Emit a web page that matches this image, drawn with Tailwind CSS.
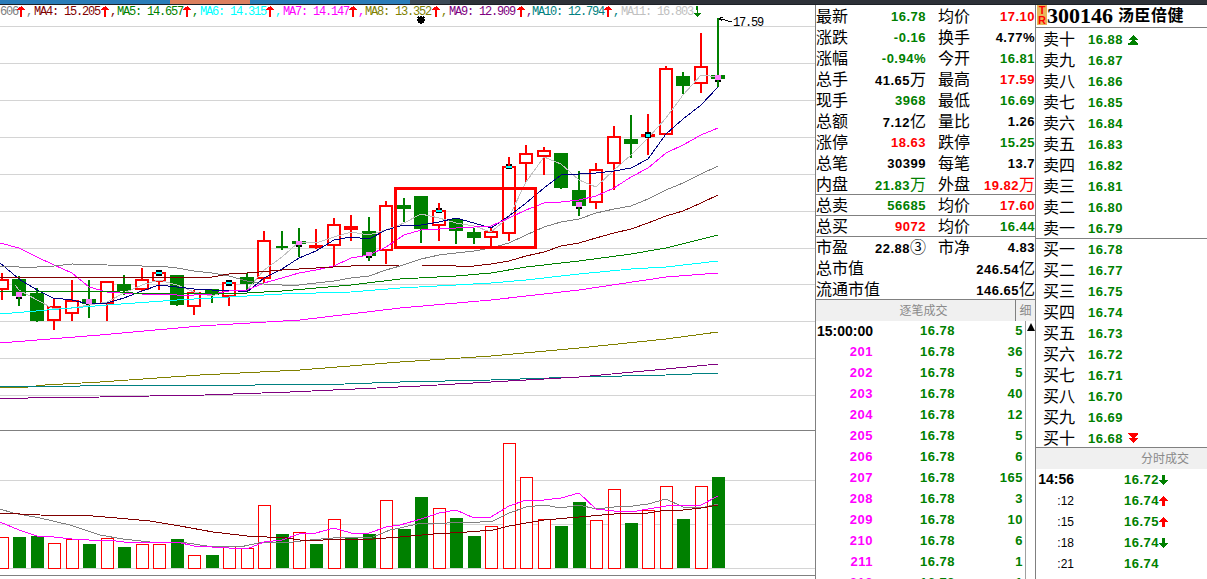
<!DOCTYPE html>
<html lang="zh">
<head>
<meta charset="utf-8">
<title>300146 汤臣倍健</title>
<script src="https://cdn.jsdelivr.net/npm/@tailwindcss/browser@4"></script>
</head>
<body class="m-0 bg-white">
<div class="w-[1207px] h-[579px] overflow-hidden bg-white flex flex-col text-black font-['Liberation_Sans','Noto_Sans_CJK_SC',sans-serif]">
  <!-- window strip -->
  <div class="h-[5px] flex shrink-0 border-b border-[#1c2026]">
    <div class="w-[170px] bg-[#2a7cb8]"></div>
    <div class="w-[80px] bg-[#dc7f5e]"></div>
    <div class="w-[160px] bg-[#2a7cb8]"></div>
    <div class="w-[40px] bg-[#3d4a57]"></div>
    <div class="flex-1 bg-[#2d3138]"></div>
  </div>
  <div class="flex flex-1 min-h-0">
    <!-- chart -->
    <div class="relative w-[815px] h-[574px] shrink-0 overflow-hidden">
      <svg width="815" height="574" viewBox="0 5 815 574" shape-rendering="crispEdges" fill="none">
        <path stroke="#d4d4d4" d="M0 26.5H815M0 63.5H815M0 100.5H815M0 137.5H815M0 174.5H815M0 211.5H815M0 248.5H815M0 284.5H815M0 321.5H815M0 358.5H815M0 395.5H815M0 480.5H815M0 524.5H815M0 568.5H815"/>
        <path stroke="#808080" d="M0 430.5H815M0 575.5H815"/>
        <!-- candle wicks -->
        <path stroke="#ff0000" stroke-width="2" d="M2 273V279M2 290V300M54 299V306M54 321V330M72 280V300M72 314V321M107 304V321M142 268V279M142 290V291M159 270V272M159 282V290M194 290V292M194 307V315M229 297V306M264 231V240M264 279V283M316 229V245M316 248V249M334 218V224M334 246V267M351 215V226M351 230V241M386 201V205M386 251V264M439 203V210M439 226V241M491 228V231M491 238V248M509 157V166M509 234V241M526 145V153M526 164V182M544 147V150M544 157V175M596 163V169M596 203V209M614 126V136M614 164V190M648 114V134M648 137V155M666 66V68M701 33V66M701 84V93"/>
        <path stroke="#008000" stroke-width="2" d="M19 276V306M37 288V322M89 280V318M124 275V295M177 275V306M212 289V303M247 273V291M282 231V250M299 228V257M369 217V261M404 198V222M421 196V243M456 219V244M474 228V244M561 153V189M579 171V216M631 115V158M683 72V94M718 18V87"/>
        <!-- candle bodies -->
        <path fill="#ffffff" stroke="#ff0000" stroke-width="2" d="M-4 280H8V289H-4ZM48 307H60V320H48ZM66 301H78V313H66ZM101 282H113V303H101ZM136 280H148V289H136ZM153 273H165V281H153ZM188 293H200V306H188ZM223 283H235V296H223ZM258 241H270V278H258ZM310 246H322V247H310ZM328 225H340V245H328ZM345 227H357V229H345ZM380 206H392V250H380ZM433 211H445V225H433ZM485 232H497V237H485ZM503 167H515V233H503ZM520 154H532V163H520ZM538 151H550V156H538ZM590 170H602V202H590ZM608 137H620V163H608ZM642 135H654V136H642ZM660 69H672V134H660ZM695 67H707V83H695Z"/>
        <path fill="#008000" d="M12 279h14v17h-14zM30 293h14v28h-14zM82 299h14v5h-14zM117 284h14v7h-14zM170 275h14v30h-14zM205 289h14v6h-14zM240 277h14v7h-14zM276 246h12v2h-12zM292 241h14v3h-14zM362 231h14v25h-14zM397 205h14v4h-14zM414 196h14v33h-14zM449 219h14v12h-14zM467 232h14v6h-14zM554 153h14v35h-14zM572 190h14v16h-14zM624 139h14v5h-14zM676 76h14v10h-14zM711 75h14v4h-14z"/>
        <!-- moving averages -->
        <polyline stroke="#c0c0c0" points="15,285 19,290 37,300 54,309 72,308 89,305 107,302 124,293 142,285 159,280 177,285 194,292 212,296 229,290 247,290 264,270 282,257 299,242 316,243 334,237 351,232 369,235 386,230 404,223 421,214 439,218 456,223 474,226 491,232 509,217 526,182 544,157 561,164 579,180 596,187 614,170 631,155 648,138 666,118 683,95 701,75 718,77"/>
        <polyline stroke="#000080" points="0,263 19,279 37,290 53,298 72,300 89,304 107,303 124,298 142,291 159,285 177,287 194,289 212,290 229,290 247,292 264,278 282,269 299,258 316,251 334,240 351,237 369,239 386,230 404,225 421,225 439,222 456,218 474,223 491,228 509,216 526,203 544,188 561,175 579,174 596,173 614,171 631,168 648,159 666,134 683,119 701,105 718,87"/>
        <polyline stroke="#ff00ff" points="0,243 19,248 37,257 54,265 72,273 89,287 107,292 124,293 142,294 159,294 177,295 194,295 212,294 229,291 247,290 264,283 282,278 299,273 316,270 334,266 351,258 369,255 386,247 404,235 421,230 439,229 456,228 474,227 491,226 509,218 526,210 544,203 561,202 579,200 596,196 614,188 631,177 648,168 666,153 683,145 701,135 718,128"/>
        <polyline stroke="#808080" points="0,266 19,267 37,267 54,266 72,264 107,265 142,266 159,266 177,268 194,271 212,273 229,276 247,281 264,284 282,285 299,285 316,283 334,281 351,278 369,276 386,270 400,266 421,259 439,255 456,253 474,251 491,248 509,243 526,235 544,227 561,222 579,219 596,213 614,209 631,206 648,199 666,190 683,183 701,174 718,166"/>
        <polyline stroke="#800000" points="0,277 54,277 107,277 177,277 212,277 229,274 247,273 282,270 316,268 351,266 400,265 421,265 456,266 474,266 491,264 509,261 526,256 544,252 561,246 579,243 596,238 614,233 631,229 648,223 666,216 683,211 701,203 718,195"/>
        <polyline stroke="#008000" points="0,291 107,291 133,293 177,293 247,293 282,291 316,288 351,285 400,279 456,276 491,273 526,267 579,261 631,254 666,248 718,235"/>
        <polyline stroke="#00ffff" points="0,314 107,305 177,300 282,294 351,292 400,288 456,285 491,283 526,280 579,274 631,269 666,267 718,261"/>
        <polyline stroke="#ff00ff" points="0,343 100,335 200,326 300,320 400,308 491,300 579,290 666,277 718,273"/>
        <polyline stroke="#808000" points="0,388 28,387 45,385 100,382 200,375 300,370 400,362 491,356 579,348 666,339 718,332"/>
        <polyline stroke="#008080" points="0,386 80,386 81,385 255,385 345,384 400,382 491,380 579,377 666,375 718,373"/>
        <polyline stroke="#800080" points="0,398 28,398 100,397 150,396 205,395 290,392 355,389 420,386 491,382 579,377 666,369 718,364"/>
        <!-- markers -->
        <path fill="#ff80ff" d="M16 292h6v5h-6zM86 299h6v5h-6zM296 241h6v4h-6zM366 252h6v4h-6zM576 202h6v5h-6zM715 75h6v5h-6z"/>
        <path fill="#000000" d="M16 297h2v2h-2zM20 297h2v2h-2zM86 304h2v1h-2zM296 245h2v2h-2zM300 245h2v2h-2zM366 256h2v2h-2zM370 256h2v2h-2zM576 207h2v2h-2zM580 207h2v2h-2zM715 80h2v2h-2zM719 80h2v2h-2zM156 270h6v2h-6zM156 274h6v2h-6zM226 280h6v2h-6zM226 284h6v2h-6zM436 208h2v2h-2zM440 208h2v2h-2zM436 212h6v1h-6zM506 164h2v2h-2zM510 164h2v2h-2zM506 168h6v1h-6zM645 132h6v6h-6z"/>
        <path fill="#00ffff" d="M156 272h6v2h-6zM226 282h6v2h-6zM436 210h6v2h-6zM506 166h6v2h-6zM646 134h4v3h-4z"/>
        <!-- annotation -->
        <path stroke="#000000" d="M719 18.5L732 22M719 18.5L723 17M719 18.5L722 21"/>
        <path stroke="#000000" stroke-width="2" d="M418 17L424 23M424 17L418 23M421 16V24M417 20H425"/>
        <!-- red box -->
        <rect x="395.5" y="188.5" width="140" height="59" fill="none" stroke="#ff0000" stroke-width="3"/>
        <!-- volume bars -->
        <path fill="#008000" d="M13 537h13v31h-13zM31 536h13v32h-13zM83 544h13v24h-13zM118 547h13v21h-13zM171 539h13v29h-13zM206 555h13v13h-13zM276 534h13v34h-13zM310 544h13v24h-13zM345 537h13v31h-13zM363 534h13v34h-13zM398 529h13v39h-13zM415 497h13v71h-13zM450 518h13v50h-13zM468 536h13v32h-13zM555 526h13v42h-13zM573 502h13v66h-13zM625 523h13v45h-13zM677 519h13v49h-13zM712 477h13v91h-13z"/>
        <path fill="#ffffff" stroke="#ff0000" d="M-4 537.5H8.5V568.5H-4ZM48.5 543.5H60.5V568.5H48.5ZM66.5 539.5H78.5V568.5H66.5ZM101.5 538.5H113.5V568.5H101.5ZM136.5 544.5H148.5V568.5H136.5ZM153.5 544.5H165.5V568.5H153.5ZM188.5 555.5H200.5V568.5H188.5ZM223.5 546.5H235.5V568.5H223.5ZM241.5 548.5H253.5V568.5H241.5ZM258.5 505.5H270.5V568.5H258.5ZM293.5 532.5H305.5V568.5H293.5ZM328.5 519.5H340.5V568.5H328.5ZM380.5 500.5H392.5V568.5H380.5ZM433.5 508.5H445.5V568.5H433.5ZM485.5 526.5H497.5V568.5H485.5ZM503.5 443.5H515.5V568.5H503.5ZM520.5 477.5H532.5V568.5H520.5ZM538.5 519.5H550.5V568.5H538.5ZM590.5 520.5H602.5V568.5H590.5ZM608.5 489.5H620.5V568.5H608.5ZM642.5 510.5H654.5V568.5H642.5ZM660.5 486.5H672.5V568.5H660.5ZM695.5 486.5H707.5V568.5H695.5Z"/>
        <!-- volume averages -->
        <polyline stroke="#808080" points="0,509 13,513 40,518 70,525 100,535 123,539 150,542 180,542 207,546 240,547 263,542 293,542 310,540 333,538 373,537 390,530 400,528 421,523 447,523 456,522 480,522 493,521 509,513 526,507 544,505 561,508 579,505 596,509 614,507 633,506 648,504 666,499 683,507 701,508 718,504"/>
        <polyline stroke="#ff00ff" points="0,522 19,530 37,536 54,537 72,539 89,540 107,540 124,542 142,542 159,543 177,542 194,546 212,547 229,548 247,549 264,542 282,540 299,534 316,533 334,528 351,533 369,533 386,527 400,525 421,519 439,513 456,510 474,518 491,517 509,506 526,500 544,500 561,498 579,493 596,509 614,511 631,512 648,509 666,506 683,505 701,505 718,496"/>
        <polyline stroke="#800000" points="0,513 40,515 93,516 117,518 150,521 180,526 213,532 247,536 267,537 287,538 300,540 323,540 347,539 373,539 400,537 433,534 467,532 493,530 509,526 526,523 544,520 579,517 614,514 648,513 666,510 683,510 701,508 718,505"/>
      </svg>
      <!-- legend -->
      <div class="absolute left-0 top-px flex h-[12px] items-center whitespace-nowrap font-['Liberation_Mono',monospace] text-[12px] leading-[12px] tracking-[-1.2px]">
        <div class="flex w-[34px] text-[#808080]"><span class="w-[17px]">606</span><svg width="9" height="11" viewBox="0 0 9 11" shape-rendering="crispEdges"><path fill="#ff0000" d="M4 0h1v1h1v1h1v1h1v1h-3v7h-2v-7h-3v-1h1v-1h1v-1h1z"/></svg><span>,</span></div>
        <div class="flex w-[83px] text-[#800000]"><span class="w-[67px]">MA4: 15.205</span><svg width="9" height="11" viewBox="0 0 9 11" shape-rendering="crispEdges"><path fill="#ff0000" d="M4 0h1v1h1v1h1v1h1v1h-3v7h-2v-7h-3v-1h1v-1h1v-1h1z"/></svg><span>,</span></div>
        <div class="flex w-[83px] text-[#008000]"><span class="w-[66px]">MA5: 14.657</span><svg width="9" height="11" viewBox="0 0 9 11" shape-rendering="crispEdges"><path fill="#ff0000" d="M4 0h1v1h1v1h1v1h1v1h-3v7h-2v-7h-3v-1h1v-1h1v-1h1z"/></svg><span>,</span></div>
        <div class="flex w-[83px] text-[#00ffff]"><span class="w-[66px]">MA6: 14.315</span><svg width="9" height="11" viewBox="0 0 9 11" shape-rendering="crispEdges"><path fill="#ff0000" d="M4 0h1v1h1v1h1v1h1v1h-3v7h-2v-7h-3v-1h1v-1h1v-1h1z"/></svg><span>,</span></div>
        <div class="flex w-[82px] text-[#ff00ff]"><span class="w-[66px]">MA7: 14.147</span><svg width="9" height="11" viewBox="0 0 9 11" shape-rendering="crispEdges"><path fill="#ff0000" d="M4 0h1v1h1v1h1v1h1v1h-3v7h-2v-7h-3v-1h1v-1h1v-1h1z"/></svg><span>,</span></div>
        <div class="flex w-[84px] text-[#808000]"><span class="w-[67px]">MA8: 13.352</span><svg width="9" height="11" viewBox="0 0 9 11" shape-rendering="crispEdges"><path fill="#ff0000" d="M4 0h1v1h1v1h1v1h1v1h-3v7h-2v-7h-3v-1h1v-1h1v-1h1z"/></svg><span>,</span></div>
        <div class="flex w-[83px] text-[#800080]"><span class="w-[68px]">MA9: 12.909</span><svg width="9" height="11" viewBox="0 0 9 11" shape-rendering="crispEdges"><path fill="#ff0000" d="M4 0h1v1h1v1h1v1h1v1h-3v7h-2v-7h-3v-1h1v-1h1v-1h1z"/></svg><span>,</span></div>
        <div class="flex w-[89px] text-[#008080]"><span class="w-[72px]">MA10: 12.794</span><svg width="9" height="11" viewBox="0 0 9 11" shape-rendering="crispEdges"><path fill="#ff0000" d="M4 0h1v1h1v1h1v1h1v1h-3v7h-2v-7h-3v-1h1v-1h1v-1h1z"/></svg><span>,</span></div>
        <div class="flex w-[89px] text-[#c0c0c0]"><span class="w-[72px]">MA11: 16.803</span><svg width="9" height="11" viewBox="0 0 9 11" shape-rendering="crispEdges"><path fill="#008000" d="M3 0h2v7h3v1h-1v1h-1v1h-1v1h-1v-1h-1v-1h-1v-1h-1v-1h3z"/></svg></div>
      </div>
      <div class="absolute left-[733px] top-[12px] font-['Liberation_Mono',monospace] text-[12px] leading-[12px] tracking-[-1.2px] text-black">17.59</div>
    </div>

    <!-- quote column -->
    <div class="w-[220px] h-[574px] shrink-0 border-l border-[#808080] flex flex-col text-[16px] overflow-hidden">
      <div class="flex h-[21px] pt-[2px] items-center whitespace-nowrap"><span class="w-[48px]">最新</span><span class="w-[62px] text-right text-[13px] font-bold tracking-[0.5px] text-[#008000]">16.78</span><span class="ml-[12px] w-[48px]">均价</span><span class="w-[49px] text-right text-[13px] font-bold tracking-[0.5px] text-[#ff0000]">17.10</span></div>
      <div class="flex h-[21px] pt-[2px] items-center whitespace-nowrap"><span class="w-[48px]">涨跌</span><span class="w-[62px] text-right text-[13px] font-bold tracking-[0.5px] text-[#008000]">-0.16</span><span class="ml-[12px] w-[48px]">换手</span><span class="w-[49px] text-right text-[13px] font-bold tracking-[0.5px]">4.77%</span></div>
      <div class="flex h-[21px] pt-[2px] items-center whitespace-nowrap"><span class="w-[48px]">涨幅</span><span class="w-[62px] text-right text-[13px] font-bold tracking-[0.5px] text-[#008000]">-0.94%</span><span class="ml-[12px] w-[48px]">今开</span><span class="w-[49px] text-right text-[13px] font-bold tracking-[0.5px] text-[#008000]">16.81</span></div>
      <div class="flex h-[21px] pt-[2px] items-center whitespace-nowrap"><span class="w-[48px]">总手</span><span class="w-[62px] text-right text-[13px] font-bold tracking-[0.5px]">41.65<span class="text-[16px] font-normal tracking-normal">万</span></span><span class="ml-[12px] w-[48px]">最高</span><span class="w-[49px] text-right text-[13px] font-bold tracking-[0.5px] text-[#ff0000]">17.59</span></div>
      <div class="flex h-[21px] pt-[2px] items-center whitespace-nowrap"><span class="w-[48px]">现手</span><span class="w-[62px] text-right text-[13px] font-bold tracking-[0.5px] text-[#008000]">3968</span><span class="ml-[12px] w-[48px]">最低</span><span class="w-[49px] text-right text-[13px] font-bold tracking-[0.5px] text-[#008000]">16.69</span></div>
      <div class="flex h-[21px] pt-[2px] items-center whitespace-nowrap"><span class="w-[48px]">总额</span><span class="w-[62px] text-right text-[13px] font-bold tracking-[0.5px]">7.12<span class="text-[16px] font-normal tracking-normal">亿</span></span><span class="ml-[12px] w-[48px]">量比</span><span class="w-[49px] text-right text-[13px] font-bold tracking-[0.5px]">1.26</span></div>
      <div class="flex h-[21px] pt-[2px] items-center whitespace-nowrap"><span class="w-[48px]">涨停</span><span class="w-[62px] text-right text-[13px] font-bold tracking-[0.5px] text-[#ff0000]">18.63</span><span class="ml-[12px] w-[48px]">跌停</span><span class="w-[49px] text-right text-[13px] font-bold tracking-[0.5px] text-[#008000]">15.25</span></div>
      <div class="flex h-[21px] pt-[2px] items-center whitespace-nowrap"><span class="w-[48px]">总笔</span><span class="w-[62px] text-right text-[13px] font-bold tracking-[0.5px]">30399</span><span class="ml-[12px] w-[48px]">每笔</span><span class="w-[49px] text-right text-[13px] font-bold tracking-[0.5px]">13.7</span></div>
      <div class="flex h-[21px] pt-[2px] items-center whitespace-nowrap"><span class="w-[48px]">内盘</span><span class="w-[62px] text-right text-[13px] font-bold tracking-[0.5px] text-[#008000]">21.83<span class="text-[16px] font-normal tracking-normal">万</span></span><span class="ml-[12px] w-[46px]">外盘</span><span class="w-[51px] text-right text-[13px] font-bold tracking-[0.5px] text-[#ff0000]">19.82<span class="text-[16px] font-normal tracking-normal">万</span></span></div>
      <div class="flex h-[21px] pt-[2px] items-center whitespace-nowrap border-t border-[#808080]"><span class="w-[48px]">总卖</span><span class="w-[62px] text-right text-[13px] font-bold tracking-[0.5px] text-[#008000]">56685</span><span class="ml-[12px] w-[48px]">均价</span><span class="w-[49px] text-right text-[13px] font-bold tracking-[0.5px] text-[#ff0000]">17.60</span></div>
      <div class="flex h-[21px] pt-[2px] items-center whitespace-nowrap border-t border-[#808080]"><span class="w-[48px]">总买</span><span class="w-[62px] text-right text-[13px] font-bold tracking-[0.5px] text-[#ff0000]">9072</span><span class="ml-[12px] w-[48px]">均价</span><span class="w-[49px] text-right text-[13px] font-bold tracking-[0.5px] text-[#008000]">16.44</span></div>
      <div class="flex h-[22px] items-center whitespace-nowrap border-t border-[#808080]"><span class="w-[48px]">市盈</span><span class="w-[62px] text-right text-[13px] font-bold tracking-[0.5px]">22.88<span class="text-[16px] font-normal tracking-normal">③</span></span><span class="ml-[12px] w-[48px]">市净</span><span class="w-[49px] text-right text-[13px] font-bold tracking-[0.5px]">4.83</span></div>
      <div class="flex h-[21px] items-center justify-between whitespace-nowrap"><span>总市值</span><span class="text-[13px] font-bold tracking-[0.5px]">246.54<span class="text-[16px] font-normal tracking-normal">亿</span></span></div>
      <div class="flex h-[20px] pt-[2px] items-center justify-between whitespace-nowrap"><span>流通市值</span><span class="text-[13px] font-bold tracking-[0.5px]">146.65<span class="text-[16px] font-normal tracking-normal">亿</span></span></div>
      <!-- tick header -->
      <div class="flex h-[22px] shrink-0 border-t border-[#808080] bg-[#f0f0f0] text-[12px] text-[#8a8a8a]">
        <div class="flex-1 flex items-center justify-center pl-[16px]">逐笔成交</div>
        <div class="w-[20px] border-l border-[#808080] flex items-center justify-center">细</div>
      </div>
      <!-- tick list -->
      <div class="flex flex-1 min-h-0">
        <div class="flex-1 flex flex-col text-[13px] font-bold tracking-[0.5px] text-[#008000]">
          <div class="flex h-[21px] pb-[2px] shrink-0 items-center"><span class="mt-[2px] w-[57px] text-right text-[14px] tracking-normal text-black">15:00:00</span><span class="ml-[47px]">16.78</span><span class="flex-1 text-right pr-[2px]">5</span></div>
          <div class="flex h-[21px] pb-[2px] shrink-0 items-center"><span class="w-[57px] text-right text-[#ff00ff]">201</span><span class="ml-[47px]">16.78</span><span class="flex-1 text-right pr-[2px]">36</span></div>
          <div class="flex h-[21px] pb-[2px] shrink-0 items-center"><span class="w-[57px] text-right text-[#ff00ff]">202</span><span class="ml-[47px]">16.78</span><span class="flex-1 text-right pr-[2px]">5</span></div>
          <div class="flex h-[21px] pb-[2px] shrink-0 items-center"><span class="w-[57px] text-right text-[#ff00ff]">203</span><span class="ml-[47px]">16.78</span><span class="flex-1 text-right pr-[2px]">40</span></div>
          <div class="flex h-[21px] pb-[2px] shrink-0 items-center"><span class="w-[57px] text-right text-[#ff00ff]">204</span><span class="ml-[47px]">16.78</span><span class="flex-1 text-right pr-[2px]">12</span></div>
          <div class="flex h-[21px] pb-[2px] shrink-0 items-center"><span class="w-[57px] text-right text-[#ff00ff]">205</span><span class="ml-[47px]">16.78</span><span class="flex-1 text-right pr-[2px]">5</span></div>
          <div class="flex h-[21px] pb-[2px] shrink-0 items-center"><span class="w-[57px] text-right text-[#ff00ff]">206</span><span class="ml-[47px]">16.78</span><span class="flex-1 text-right pr-[2px]">6</span></div>
          <div class="flex h-[21px] pb-[2px] shrink-0 items-center"><span class="w-[57px] text-right text-[#ff00ff]">207</span><span class="ml-[47px]">16.78</span><span class="flex-1 text-right pr-[2px]">165</span></div>
          <div class="flex h-[21px] pb-[2px] shrink-0 items-center"><span class="w-[57px] text-right text-[#ff00ff]">208</span><span class="ml-[47px]">16.78</span><span class="flex-1 text-right pr-[2px]">3</span></div>
          <div class="flex h-[21px] pb-[2px] shrink-0 items-center"><span class="w-[57px] text-right text-[#ff00ff]">209</span><span class="ml-[47px]">16.78</span><span class="flex-1 text-right pr-[2px]">10</span></div>
          <div class="flex h-[21px] pb-[2px] shrink-0 items-center"><span class="w-[57px] text-right text-[#ff00ff]">210</span><span class="ml-[47px]">16.78</span><span class="flex-1 text-right pr-[2px]">6</span></div>
          <div class="flex h-[21px] pb-[2px] shrink-0 items-center"><span class="w-[57px] text-right text-[#ff00ff]">211</span><span class="ml-[47px]">16.78</span><span class="flex-1 text-right pr-[2px]">1</span></div>
          <div class="flex h-[21px] pb-[2px] shrink-0 items-center"><span class="w-[57px] text-right text-[#ff00ff]">212</span><span class="ml-[47px]">16.78</span><span class="flex-1 text-right pr-[2px]">1</span></div>
        </div>
        <div class="w-[10px] shrink-0 border-l border-[#a0a0a0] flex justify-center pt-[2px]">
          <svg width="8" height="8" viewBox="0 0 8 8" class="ml-px"><path fill="#000000" d="M4 0L8 8H0Z"/></svg>
        </div>
      </div>
    </div>

    <!-- order book column -->
    <div class="flex-1 h-[574px] border-l border-[#808080] flex flex-col text-[16px] overflow-hidden">
      <div class="flex h-[23px] shrink-0 items-start border-b border-[#808080] whitespace-nowrap">
        <div class="ml-px w-[10px] h-[20px] bg-[#e8b75a] flex flex-col items-center text-[11px] leading-[10px] font-bold text-[#ff0000]"><span>T</span><span>R</span></div>
        <span class="font-['Liberation_Serif',serif] text-[22px] leading-[22px] font-bold">300146</span>
        <span class="ml-[5px] text-[16px] leading-[22px] font-bold tracking-[0.5px]">汤臣倍健</span>
      </div>
      <div class="flex h-[21px] pt-[2px] shrink-0 items-center pl-[7px]"><span class="w-[45px]">卖十</span><span class="w-[40px] text-[13px] font-bold tracking-[0.5px] text-[#008000]">16.88</span><svg width="10" height="10" viewBox="0 0 10 10" shape-rendering="crispEdges"><path fill="#008000" d="M5 0L10 5H0ZM5 4L10 9H0ZM0 8h10v2H0z"/></svg></div>
      <div class="flex h-[21px] pt-[2px] shrink-0 items-center pl-[7px]"><span class="w-[45px]">卖九</span><span class="text-[13px] font-bold tracking-[0.5px] text-[#008000]">16.87</span></div>
      <div class="flex h-[21px] pt-[2px] shrink-0 items-center pl-[7px]"><span class="w-[45px]">卖八</span><span class="text-[13px] font-bold tracking-[0.5px] text-[#008000]">16.86</span></div>
      <div class="flex h-[21px] pt-[2px] shrink-0 items-center pl-[7px]"><span class="w-[45px]">卖七</span><span class="text-[13px] font-bold tracking-[0.5px] text-[#008000]">16.85</span></div>
      <div class="flex h-[21px] pt-[2px] shrink-0 items-center pl-[7px]"><span class="w-[45px]">卖六</span><span class="text-[13px] font-bold tracking-[0.5px] text-[#008000]">16.84</span></div>
      <div class="flex h-[21px] pt-[2px] shrink-0 items-center pl-[7px]"><span class="w-[45px]">卖五</span><span class="text-[13px] font-bold tracking-[0.5px] text-[#008000]">16.83</span></div>
      <div class="flex h-[21px] pt-[2px] shrink-0 items-center pl-[7px]"><span class="w-[45px]">卖四</span><span class="text-[13px] font-bold tracking-[0.5px] text-[#008000]">16.82</span></div>
      <div class="flex h-[21px] pt-[2px] shrink-0 items-center pl-[7px]"><span class="w-[45px]">卖三</span><span class="text-[13px] font-bold tracking-[0.5px] text-[#008000]">16.81</span></div>
      <div class="flex h-[21px] pt-[2px] shrink-0 items-center pl-[7px]"><span class="w-[45px]">卖二</span><span class="text-[13px] font-bold tracking-[0.5px] text-[#008000]">16.80</span></div>
      <div class="flex h-[21px] pt-[2px] shrink-0 items-center pl-[7px]"><span class="w-[45px]">卖一</span><span class="text-[13px] font-bold tracking-[0.5px] text-[#008000]">16.79</span></div>
      <div class="flex h-[22px] shrink-0 items-center pl-[7px] border-t border-[#808080]"><span class="w-[45px]">买一</span><span class="text-[13px] font-bold tracking-[0.5px] text-[#008000]">16.78</span></div>
      <div class="flex h-[21px] shrink-0 items-center pl-[7px]"><span class="w-[45px]">买二</span><span class="text-[13px] font-bold tracking-[0.5px] text-[#008000]">16.77</span></div>
      <div class="flex h-[21px] shrink-0 items-center pl-[7px]"><span class="w-[45px]">买三</span><span class="text-[13px] font-bold tracking-[0.5px] text-[#008000]">16.75</span></div>
      <div class="flex h-[21px] shrink-0 items-center pl-[7px]"><span class="w-[45px]">买四</span><span class="text-[13px] font-bold tracking-[0.5px] text-[#008000]">16.74</span></div>
      <div class="flex h-[21px] shrink-0 items-center pl-[7px]"><span class="w-[45px]">买五</span><span class="text-[13px] font-bold tracking-[0.5px] text-[#008000]">16.73</span></div>
      <div class="flex h-[21px] shrink-0 items-center pl-[7px]"><span class="w-[45px]">买六</span><span class="text-[13px] font-bold tracking-[0.5px] text-[#008000]">16.72</span></div>
      <div class="flex h-[21px] shrink-0 items-center pl-[7px]"><span class="w-[45px]">买七</span><span class="text-[13px] font-bold tracking-[0.5px] text-[#008000]">16.71</span></div>
      <div class="flex h-[21px] shrink-0 items-center pl-[7px]"><span class="w-[45px]">买八</span><span class="text-[13px] font-bold tracking-[0.5px] text-[#008000]">16.70</span></div>
      <div class="flex h-[21px] shrink-0 items-center pl-[7px]"><span class="w-[45px]">买九</span><span class="text-[13px] font-bold tracking-[0.5px] text-[#008000]">16.69</span></div>
      <div class="flex h-[19px] shrink-0 items-start pl-[7px] overflow-hidden leading-[21px]"><span class="w-[45px]">买十</span><span class="w-[40px] text-[13px] font-bold tracking-[0.5px] text-[#008000]">16.68</span><svg width="10" height="10" viewBox="0 0 10 10" shape-rendering="crispEdges" class="mt-[5px]"><path fill="#ff0000" d="M0 0h10v1H0zM0 1H10L5 6ZM0 5H10L5 10Z"/></svg></div>
      <!-- minute header -->
      <div class="flex h-[22px] shrink-0 items-center justify-end border-t border-[#808080] bg-[#f0f0f0] pr-[18px] text-[12px] text-[#8a8a8a]">分时成交</div>
      <div class="flex h-[21px] shrink-0 items-center"><span class="w-[38px] text-right text-[14px] font-bold">14:56</span><span class="ml-[50px] w-[35px] text-[13px] font-bold tracking-[0.5px] text-[#008000]">16.72</span><svg width="9" height="10" viewBox="0 0 9 10" shape-rendering="crispEdges"><path fill="#008000" d="M3 0h3v5h3L4.5 10L0 5h3z"/></svg></div>
      <div class="flex h-[21px] shrink-0 items-center"><span class="w-[38px] text-right text-[12px]">:12</span><span class="ml-[50px] w-[35px] text-[13px] font-bold tracking-[0.5px] text-[#008000]">16.74</span><svg width="9" height="10" viewBox="0 0 9 10" shape-rendering="crispEdges"><path fill="#ff0000" d="M4.5 0L9 5H6v5H3V5H0z"/></svg></div>
      <div class="flex h-[21px] shrink-0 items-center"><span class="w-[38px] text-right text-[12px]">:15</span><span class="ml-[50px] w-[35px] text-[13px] font-bold tracking-[0.5px] text-[#008000]">16.75</span><svg width="9" height="10" viewBox="0 0 9 10" shape-rendering="crispEdges"><path fill="#ff0000" d="M4.5 0L9 5H6v5H3V5H0z"/></svg></div>
      <div class="flex h-[21px] shrink-0 items-center"><span class="w-[38px] text-right text-[12px]">:18</span><span class="ml-[50px] w-[35px] text-[13px] font-bold tracking-[0.5px] text-[#008000]">16.74</span><svg width="9" height="10" viewBox="0 0 9 10" shape-rendering="crispEdges"><path fill="#008000" d="M3 0h3v5h3L4.5 10L0 5h3z"/></svg></div>
      <div class="flex h-[21px] shrink-0 items-center"><span class="w-[38px] text-right text-[12px]">:21</span><span class="ml-[50px] w-[35px] text-[13px] font-bold tracking-[0.5px] text-[#008000]">16.74</span></div>
    </div>
  </div>
</div>
</body>
</html>
